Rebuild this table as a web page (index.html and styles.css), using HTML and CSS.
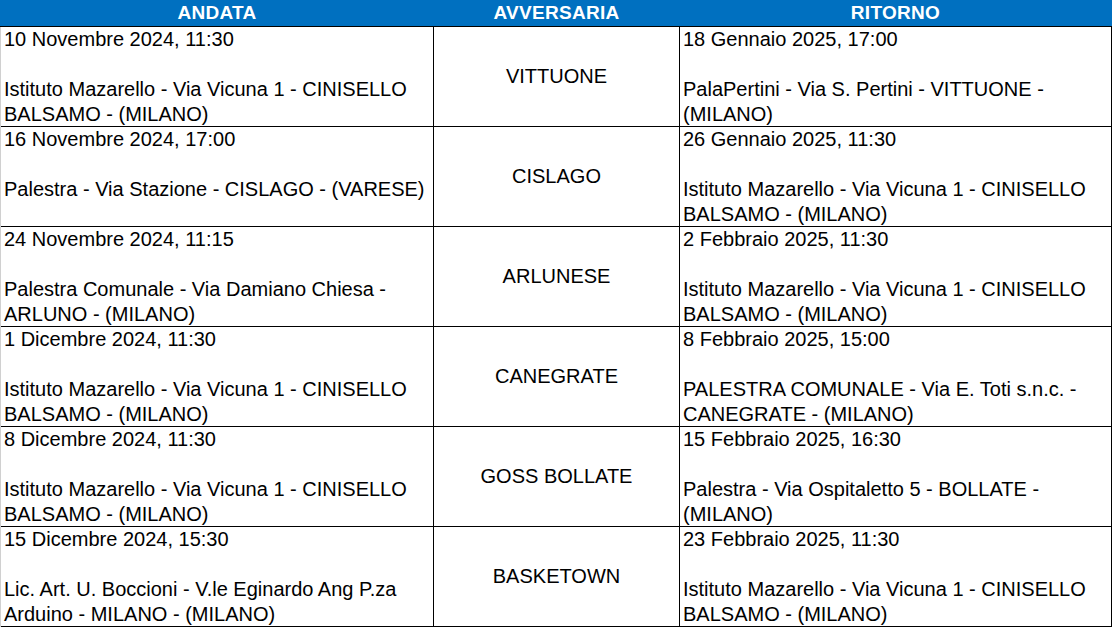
FILE: index.html
```html
<!DOCTYPE html>
<html lang="it">
<head>
<meta charset="utf-8">
<title>Calendario</title>
<link rel="stylesheet" href="styles.css">
</head>
<body>
<div class="sheet">
  <div class="head">
    <div class="hcell">ANDATA</div>
    <div class="hcell">AVVERSARIA</div>
    <div class="hcell">RITORNO</div>
  </div>

  <div class="row">
    <div class="cell side"><div>10 Novembre 2024, 11:30</div><div>&nbsp;</div><div>Istituto Mazarello - Via Vicuna 1 - CINISELLO BALSAMO - (MILANO)</div></div>
    <div class="cell team">VITTUONE</div>
    <div class="cell side"><div>18 Gennaio 2025, 17:00</div><div>&nbsp;</div><div>PalaPertini - Via S. Pertini - VITTUONE - (MILANO)</div></div>
  </div>

  <div class="row">
    <div class="cell side"><div>16 Novembre 2024, 17:00</div><div>&nbsp;</div><div>Palestra - Via Stazione - CISLAGO - (VARESE)</div></div>
    <div class="cell team">CISLAGO</div>
    <div class="cell side"><div>26 Gennaio 2025, 11:30</div><div>&nbsp;</div><div>Istituto Mazarello - Via Vicuna 1 - CINISELLO BALSAMO - (MILANO)</div></div>
  </div>

  <div class="row">
    <div class="cell side"><div>24 Novembre 2024, 11:15</div><div>&nbsp;</div><div>Palestra Comunale - Via Damiano Chiesa - ARLUNO - (MILANO)</div></div>
    <div class="cell team">ARLUNESE</div>
    <div class="cell side"><div>2 Febbraio 2025, 11:30</div><div>&nbsp;</div><div>Istituto Mazarello - Via Vicuna 1 - CINISELLO BALSAMO - (MILANO)</div></div>
  </div>

  <div class="row">
    <div class="cell side"><div>1 Dicembre 2024, 11:30</div><div>&nbsp;</div><div>Istituto Mazarello - Via Vicuna 1 - CINISELLO BALSAMO - (MILANO)</div></div>
    <div class="cell team">CANEGRATE</div>
    <div class="cell side"><div>8 Febbraio 2025, 15:00</div><div>&nbsp;</div><div>PALESTRA COMUNALE - Via E. Toti s.n.c. - CANEGRATE - (MILANO)</div></div>
  </div>

  <div class="row">
    <div class="cell side"><div>8 Dicembre 2024, 11:30</div><div>&nbsp;</div><div>Istituto Mazarello - Via Vicuna 1 - CINISELLO BALSAMO - (MILANO)</div></div>
    <div class="cell team">GOSS BOLLATE</div>
    <div class="cell side"><div>15 Febbraio 2025, 16:30</div><div>&nbsp;</div><div>Palestra - Via Ospitaletto 5 - BOLLATE - (MILANO)</div></div>
  </div>

  <div class="row">
    <div class="cell side"><div>15 Dicembre 2024, 15:30</div><div>&nbsp;</div><div>Lic. Art. U. Boccioni - V.le Eginardo Ang P.za Arduino - MILANO - (MILANO)</div></div>
    <div class="cell team">BASKETOWN</div>
    <div class="cell side"><div>23 Febbraio 2025, 11:30</div><div>&nbsp;</div><div>Istituto Mazarello - Via Vicuna 1 - CINISELLO BALSAMO - (MILANO)</div></div>
  </div>
</div>
</body>
</html>
```

FILE: styles.css
```css
html, body {
  margin: 0;
  padding: 0;
  background: #ffffff;
}

.sheet {
  width: 1112px;
  font-family: "Liberation Sans", Arial, sans-serif;
  color: #000000;
}

.head {
  display: grid;
  grid-template-columns: 434px 245px 433px;
  height: 26px;
  background: #0070c0;
  border-bottom: 1px solid #000000;
}

.hcell {
  color: #ffffff;
  font-weight: bold;
  font-size: 19px;
  letter-spacing: 0.3px;
  line-height: 26px;
  text-align: center;
}

.row {
  display: grid;
  grid-template-columns: 434px 245px 433px;
  height: 99px;
  border-bottom: 1px solid #000000;
}

.cell {
  font-size: 20px;
  line-height: 25px;
  overflow: visible;
}

.side {
  padding: 0 4px 0 4px;
}

.row .side:first-child {
  border-left: 1px solid #d0d0d0;
  border-right: 1px solid #000000;
  padding-left: 3px;
}

.row .side:last-child {
  border-left: 1px solid #000000;
  border-right: 1px solid #000000;
  padding-left: 3px;
}

.team {
  display: flex;
  align-items: center;
  justify-content: center;
  padding-bottom: 1px;
}
```
